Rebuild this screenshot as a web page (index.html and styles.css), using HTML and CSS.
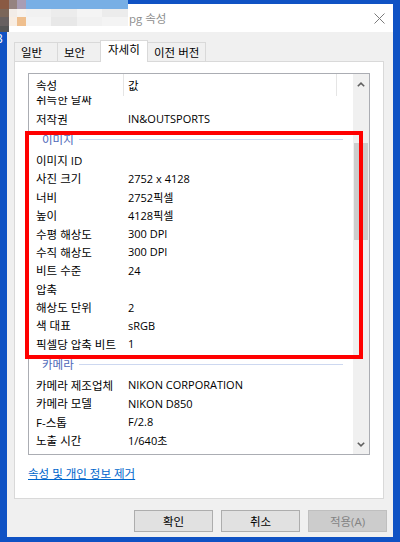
FILE: index.html
```html
<!DOCTYPE html>
<html lang="ko">
<head>
<meta charset="utf-8">
<title>속성</title>
<link rel="stylesheet" href="styles.css">
</head>
<body>
<div class="desktop">
  <div class="window">
    <div class="titlebar">
      <span class="title">pg 속성</span>
      <span class="close">
        <svg width="11" height="11" viewBox="0 0 11 11"><path d="M0.5 0.5 L10.5 10.5 M10.5 0.5 L0.5 10.5" stroke="#7b7b7b" stroke-width="1" fill="none"/></svg>
      </span>
    </div>
    <div class="client">
      <div class="tabs">
        <div class="tab">일반</div>
        <div class="tab">보안</div>
        <div class="tab active">자세히</div>
        <div class="tab">이전 버전</div>
      </div>
      <div class="panel">
        <div class="listbox">
          <div class="list-main">
            <div class="list-header">
              <div class="hcell c1">속성</div>
              <div class="hcell c2">값</div>
              <div class="hcell c3"></div>
            </div>
            <div class="list-body">
              <div class="rows">
                <div class="row clipped"><span class="k">취득한 날짜</span><span class="v"></span></div>
                <div class="row"><span class="k">저작권</span><span class="v">IN&amp;OUTSPORTS</span></div>
                <div class="group">이미지</div>
                <div class="row"><span class="k">이미지 ID</span><span class="v"></span></div>
                <div class="row"><span class="k">사진 크기</span><span class="v">2752 x 4128</span></div>
                <div class="row"><span class="k">너비</span><span class="v">2752픽셀</span></div>
                <div class="row"><span class="k">높이</span><span class="v">4128픽셀</span></div>
                <div class="row"><span class="k">수평 해상도</span><span class="v">300 DPI</span></div>
                <div class="row"><span class="k">수직 해상도</span><span class="v">300 DPI</span></div>
                <div class="row"><span class="k">비트 수준</span><span class="v">24</span></div>
                <div class="row"><span class="k">압축</span><span class="v"></span></div>
                <div class="row"><span class="k">해상도 단위</span><span class="v">2</span></div>
                <div class="row"><span class="k">색 대표</span><span class="v">sRGB</span></div>
                <div class="row"><span class="k">픽셀당 압축 비트</span><span class="v">1</span></div>
                <div class="group">카메라</div>
                <div class="row"><span class="k">카메라 제조업체</span><span class="v">NIKON CORPORATION</span></div>
                <div class="row"><span class="k">카메라 모델</span><span class="v">NIKON D850</span></div>
                <div class="row"><span class="k">F-스톱</span><span class="v">F/2.8</span></div>
                <div class="row"><span class="k">노출 시간</span><span class="v">1/640초</span></div>
              </div>
            </div>
          </div>
          <div class="scrollbar">
            <div class="sb-btn">
              <svg width="8" height="5" viewBox="0 0 8 5"><polyline points="0.8,4.3 4,1.2 7.2,4.3" fill="none" stroke="#606060" stroke-width="1.6"/></svg>
            </div>
            <div class="sb-track"><div class="sb-thumb"></div></div>
            <div class="sb-btn">
              <svg width="8" height="5" viewBox="0 0 8 5"><polyline points="0.8,0.7 4,3.8 7.2,0.7" fill="none" stroke="#606060" stroke-width="1.6"/></svg>
            </div>
          </div>
        </div>
        <a class="link" href="#">속성 및 개인 정보 제거</a>
      </div>
      <div class="buttons">
        <div class="btn">확인</div>
        <div class="btn">취소</div>
        <div class="btn disabled">적용(A)</div>
      </div>
    </div>
  </div>

  <div class="mosaic">
    <div class="m m1"></div><div class="m m2"></div><div class="m m3"></div><div class="m sky s12"></div>
    <div class="m m4"></div><div class="m m5"></div><div class="m m6"></div><div class="m g1 s3"></div><div class="m g2 s3"></div><div class="m g3 s3"></div><div class="m g2 s3"></div>
    <div class="m m7"></div><div class="m m8"></div><div class="m m9"></div><div class="m g3 s3"></div><div class="m g4 s3"></div><div class="m g1 s3"></div><div class="m g3 s3"></div>
    <div class="m m10"></div>
  </div>
  <span class="desk-label">B</span>
  <div class="highlight"></div>
</div>
</body>
</html>
```

FILE: styles.css
```css
* { box-sizing: border-box; }

html, body {
  margin: 0;
  padding: 0;
}

body {
  width: 400px;
  height: 542px;
  overflow: hidden;
  font-family: "Open Sans", "Noto Sans CJK KR", sans-serif;
  font-size: 11.5px;
  color: #000;
}

.desktop {
  position: relative;
  width: 400px;
  height: 542px;
  background: #0f52c4;
  padding: 4px 0 0 7px;
}

.window {
  width: 386px;
  height: 533px;
  background: #f0f0f0;
  display: flex;
  flex-direction: column;
}

.titlebar {
  height: 28px;
  background: #fff;
  display: flex;
  align-items: center;
  padding-left: 122px;
  padding-right: 8px;
}

.title {
  color: #8e8e8e;
  font-size: 11.5px;
}

.close {
  margin-left: auto;
  display: flex;
  margin-top: 1px;
}

.client {
  flex: 1;
  padding: 8px 9px 5px 7px;
  display: flex;
  flex-direction: column;
}

.tabs {
  height: 21px;
  display: flex;
  align-items: flex-end;
}

.tab {
  height: 19px;
  min-width: 44px;
  padding: 0 6px;
  border: 1px solid #d9d9d9;
  border-bottom: none;
  background: #f0f0f0;
  display: flex;
  align-items: center;
  margin-left: -1px;
}

.tab:first-child { margin-left: 0; }

.tab.active {
  height: 22px;
  margin-bottom: -1px;
  background: #fff;
  padding: 0 6px 5px 7px;
  position: relative;
  z-index: 1;
  min-width: 48px;
}

.panel {
  height: 438px;
  background: #fff;
  border: 1px solid #d9d9d9;
  padding: 11px 13px;
}

.listbox {
  width: 342px;
  height: 382px;
  border: 1px solid #abadb3;
  display: flex;
}

.list-main {
  width: 324px;
  display: flex;
  flex-direction: column;
}

.list-header {
  height: 22px;
  display: flex;
  flex: none;
}

.hcell {
  display: flex;
  align-items: center;
  border-right: 1px solid #e5e5e5;
}

.hcell.c1 { width: 95px; padding-left: 7px; }
.hcell.c2 { width: 213px; padding-left: 4px; }
.hcell.c3 { flex: 1; border-right: none; }

.list-body {
  flex: 1;
  overflow: hidden;
}

.row {
  height: 18.4px;
  display: flex;
  align-items: center;
  white-space: nowrap;
}

.row.clipped {
  height: 13.8px;
  overflow: hidden;
  align-items: flex-end;
}

.row.clipped .k {
  line-height: 18.4px;
}

.row .k {
  width: 95px;
  padding-left: 7px;
  flex: none;
}

.row .v {
  padding-left: 4px;
  font-size: 11px;
}

.group {
  height: 22.6px;
  display: flex;
  align-items: center;
  padding-left: 13px;
  color: #4d68b8;
}

.group::after {
  content: "";
  flex: 1;
  height: 1px;
  background: #cdd8f0;
  margin-left: 5px;
  margin-right: 10px;
}

.scrollbar {
  width: 16px;
  background: #f0f0f0;
  display: flex;
  flex-direction: column;
}

.sb-btn {
  height: 20px;
  display: flex;
  align-items: center;
  justify-content: center;
  flex: none;
}

.sb-track {
  flex: 1;
  padding-top: 49px;
}

.sb-thumb {
  width: 14px;
  height: 97px;
  margin-left: 1px;
  background: #cdcdcd;
}

.link {
  display: block;
  margin-top: 11px;
  color: #0066cc;
  text-decoration: underline;
  line-height: 15px;
  width: max-content;
}

.buttons {
  margin-top: 11px;
  margin-right: -3px;
  display: flex;
  justify-content: flex-end;
  gap: 8px;
}

.btn {
  width: 79px;
  height: 22px;
  background: #e1e1e1;
  border: 1px solid #adadad;
  display: flex;
  align-items: center;
  justify-content: center;
}

.btn.disabled {
  background: #cccccc;
  border-color: #bfbfbf;
  color: #838383;
}

/* blurred (pixelated) region over the file name */
.mosaic {
  position: absolute;
  left: 0;
  top: 0;
  display: grid;
  grid-template-columns: repeat(15, 8.5px);
  grid-template-rows: 8.5px 8.5px 8.5px 6.5px;
}

.m { height: 100%; }
.s12 { grid-column: span 12; }
.s3 { grid-column: span 3; }
.m1 { background: #8a5a43; }
.m2 { background: #958380; }
.m3 { background: #a89db4; }
.sky { background: #78afe5; }
.m4 { background: #7b6659; }
.m5 { background: #f2ece7; }
.m6 { background: #f7f3ef; }
.m7 { background: #676060; }
.m8 { background: #f8ede2; }
.m9 { background: #efbf8e; }
.m10 { background: #555555; }
.g1 { background: #f1f1f1; }
.g2 { background: #ececec; }
.g3 { background: #f4f4f4; }
.g4 { background: #e8e8e8; }

.desk-label {
  position: absolute;
  left: -5px;
  top: 30px;
  color: #fff;
  font-size: 12px;
}

.highlight {
  position: absolute;
  left: 25px;
  top: 131px;
  width: 338px;
  height: 228px;
  border: 4px solid #ff0000;
}
```
